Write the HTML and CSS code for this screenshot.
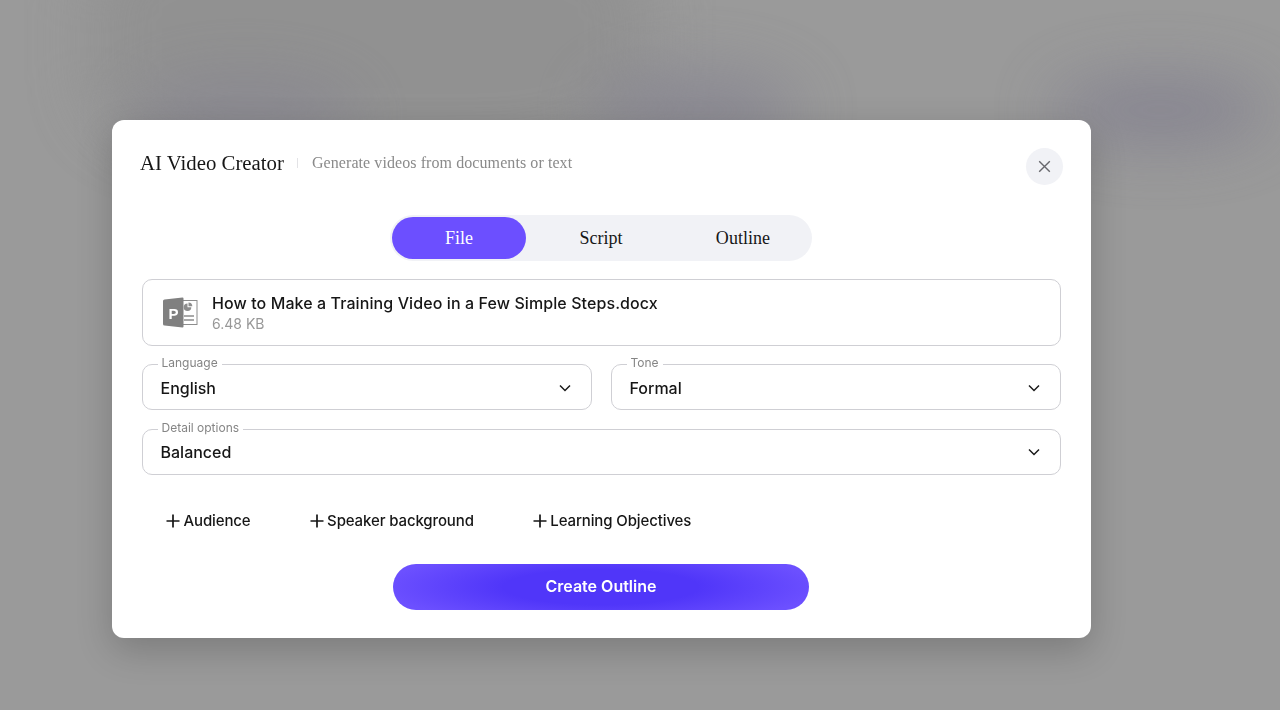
FILE: index.html
```html
<!DOCTYPE html>
<html lang="en">
<head>
<meta charset="utf-8">
<title>AI Video Creator</title>
<link rel="stylesheet" href="styles.css">
</head>
<body>
<div class="backdrop" aria-hidden="true">
  <div class="blob blob-wide"></div>
  <div class="blob blob-left"></div>
  <div class="blob blob-mid"></div>
  <div class="blob blob-right"></div>
</div>
<main class="stage">
  <section class="modal">
    <header class="modal-head">
      <div class="titles">
        <h1 class="title">AI Video Creator</h1>
        <span class="divider"></span>
        <p class="subtitle">Generate videos from documents or text</p>
      </div>
      <button class="close" aria-label="Close">
        <svg width="13" height="13" viewBox="0 0 13 13"><path d="M1.200 1.200 11.800 11.800M11.800 1.200 1.200 11.800" stroke="#67676c" stroke-width="1.400" fill="none"/></svg>
      </button>
    </header>
    <div class="tabs-row">
      <div class="tabs">
        <button class="tab tab-active">File</button>
        <button class="tab">Script</button>
        <button class="tab">Outline</button>
      </div>
    </div>
    <div class="form">
      <div class="file-box">
        <svg class="file-icon" width="35" height="32" viewBox="0 0 35 32">
          <rect x="15.500" y="3.500" width="18.500" height="24" fill="#fff" stroke="#8d8d8d"/>
          <path d="M24.500 6.500a3.800 3.800 0 1 0 3.800 3.800h-3.800z" fill="#8d8d8d"/>
          <path d="M25.500 5.500a3.800 3.800 0 0 1 3.800 3.800h-3.800z" fill="#8d8d8d"/>
          <path d="M21 19h10M21 23h10" stroke="#8d8d8d" stroke-width="1.300"/>
          <path d="M1.500 2.500 19.500.500a1 1 0 0 1 1 1v28a1 1 0 0 1-1 1L1.500 28.500a1.500 1.500 0 0 1-1.500-1.500v-23a1.500 1.500 0 0 1 1.500-1.500z" fill="#808080"/>
          <text class="file-icon-p" x="5.500" y="21.500">P</text>
        </svg>
        <div class="file-text">
          <div class="file-name">How to Make a Training Video in a Few Simple Steps.docx</div>
          <div class="file-size">6.48 KB</div>
        </div>
      </div>
      <div class="field-row">
        <fieldset class="field">
          <legend class="field-label">Language</legend>
          <span class="field-value">English</span>
          <svg class="chev" width="12" height="8" viewBox="0 0 12 8"><path d="M1 1.500 6 6.500 11 1.500" stroke="#1a1a1a" stroke-width="1.500" fill="none"/></svg>
        </fieldset>
        <fieldset class="field">
          <legend class="field-label">Tone</legend>
          <span class="field-value">Formal</span>
          <svg class="chev" width="12" height="8" viewBox="0 0 12 8"><path d="M1 1.500 6 6.500 11 1.500" stroke="#1a1a1a" stroke-width="1.500" fill="none"/></svg>
        </fieldset>
      </div>
      <fieldset class="field">
        <legend class="field-label">Detail options</legend>
        <span class="field-value">Balanced</span>
        <svg class="chev" width="12" height="8" viewBox="0 0 12 8"><path d="M1 1.500 6 6.500 11 1.500" stroke="#1a1a1a" stroke-width="1.500" fill="none"/></svg>
      </fieldset>
      <div class="extras">
        <button class="extra"><svg width="14" height="14" viewBox="0 0 14 14"><path d="M7 .500v13M.500 7h13" stroke="#161616" stroke-width="1.700" fill="none"/></svg>Audience</button>
        <button class="extra"><svg width="14" height="14" viewBox="0 0 14 14"><path d="M7 .500v13M.500 7h13" stroke="#161616" stroke-width="1.700" fill="none"/></svg>Speaker background</button>
        <button class="extra"><svg width="14" height="14" viewBox="0 0 14 14"><path d="M7 .500v13M.500 7h13" stroke="#161616" stroke-width="1.700" fill="none"/></svg>Learning Objectives</button>
      </div>
      <div class="cta-row">
        <button class="cta">Create Outline</button>
      </div>
    </div>
  </section>
</main>
</body>
</html>
```
FILE: styles.css
```css
* { box-sizing: border-box; }
html, body { margin: 0; height: 100%; }
body {
  background: #9a9a9a;
  overflow: hidden;
  font-family: "Inter", "Liberation Sans", sans-serif;
  color: #161616;
}
.backdrop { position: fixed; inset: 0; overflow: hidden; }
.blob { position: absolute; border-radius: 50%; filter: blur(30px); background: #84828f; }
.blob-wide { left: 90px; top: -80px; width: 560px; height: 240px; border-radius: 30%; background: #8e8e8e; opacity: .7; }
.blob-left { left: 130px; top: 75px; width: 230px; height: 80px; opacity: .55; }
.blob-mid { left: 590px; top: 70px; width: 210px; height: 80px; opacity: .7; }
.blob-right { left: 1050px; top: 75px; width: 220px; height: 70px; opacity: .85; }

.stage { position: relative; padding: 120px 0 0 112px; }
.modal {
  width: 979px;
  height: 518px;
  background: #fff;
  border-radius: 12px;
  padding: 28px 28px 0 28px;
  box-shadow: 0 12px 36px rgba(0, 0, 0, .2);
}
.modal-head { display: flex; align-items: center; justify-content: space-between; height: 37px; }
.titles { display: flex; align-items: center; margin-bottom: 8px; font-family: "Liberation Serif", serif; }
.title { margin: 0; font-size: 20.8px; font-weight: 400; color: #161616; }
.divider { width: 1px; height: 10px; background: #e3e3e6; margin: 0 14px 0 13px; }
.subtitle { margin: 0; font-size: 16px; letter-spacing: .08px; color: #8a8a8a; }
.close {
  width: 37px; height: 37px; border: 0; border-radius: 50%; padding: 0;
  background: #f1f2f6; display: flex; align-items: center; justify-content: center;
}
.tabs-row { display: flex; justify-content: center; margin-top: 30px; padding-right: 1px; }
.tabs {
  display: flex; gap: 8px; padding: 2px; height: 46px; width: 422px;
  border-radius: 23px; background: #f1f2f6;
}
.tab {
  flex: 1; border: 0; background: transparent; border-radius: 21px;
  font-family: "Liberation Serif", serif; font-size: 18px; letter-spacing: .04px; color: #161616; padding: 0;
}
.tab-active { background: #6c4fff; color: #fff; }

.form { padding: 0 2px; }
.file-box {
  margin-top: 18px; height: 67px; border: 1px solid #cfcfd4; border-radius: 10px;
  display: flex; align-items: center; gap: 14px; padding: 0 20px;
}
.file-icon { flex: none; }
.file-icon-p { font-family: "Liberation Sans", sans-serif; font-weight: 700; font-size: 15px; fill: #fff; }
.file-text { padding-top: 2px; }
.file-name { font-size: 16px; font-weight: 500; line-height: 20px; letter-spacing: .09px; color: #161616; }
.file-size { font-size: 14px; line-height: 20px; padding-top: 1px; color: #989898; }

.field-row { display: grid; grid-template-columns: 1fr 1fr; gap: 19px; margin-top: 10px; }
.field {
  position: relative; margin: 0; min-width: 0; height: 54px;
  border: 1px solid #cfcfd4; border-radius: 10px;
  padding: 0 18px 5px 17.5px; display: flex; align-items: center; justify-content: space-between;
}
.form > .field { margin-top: 11px; padding-bottom: 7px; }
.field-label {
  font-size: 12px; line-height: 14px; color: #858585; padding: 0 4px 2px; margin-left: -3px;
}
.field-value { font-size: 16px; font-weight: 500; color: #161616; }
.chev { margin-right: 2px; }

.extras { display: flex; gap: 59px; margin-top: 36px; padding-left: 24px; }
.extra {
  display: flex; align-items: center; gap: 3.5px; border: 0; background: transparent; padding: 0;
  font-family: "Inter", sans-serif; font-size: 15px; font-weight: 500; letter-spacing: -.12px; color: #161616; line-height: 20px;
}
.cta-row { display: flex; justify-content: center; margin-top: 33px; padding-right: 1px; }
.cta {
  width: 416px; height: 46px; border: 0; border-radius: 23px; padding: 0 0 2px;
  background: radial-gradient(ellipse 52% 85% at 50% 50%, #5036f9 0%, #5036f9 45%, #6c50ff 100%);
  color: #fff; font-family: "Inter", sans-serif; font-size: 16px; font-weight: 600;
}
```
